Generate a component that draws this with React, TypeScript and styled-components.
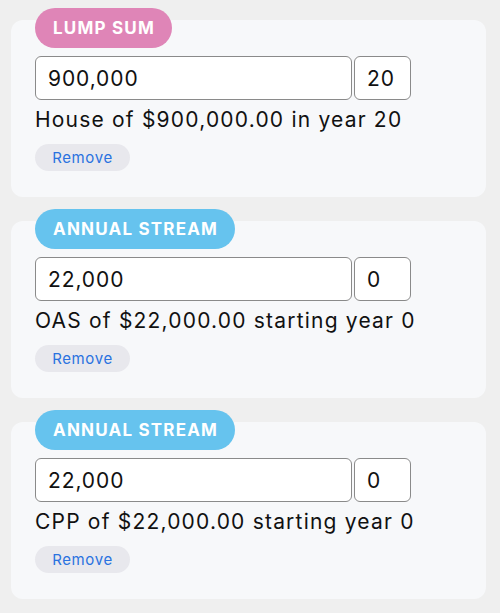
import React from "react";
import styled, { createGlobalStyle } from "styled-components";

const Global = createGlobalStyle`
  html, body { margin: 0; padding: 0; background: #efefef; }
  body { font-family: Inter, "Noto Sans", sans-serif; color: #111; }
  * { box-sizing: border-box; }
`;

const Page = styled.div`
  display: flex;
  flex-direction: column;
  gap: 24px;
  padding: 20px 14px 14px 11px;
`;

const Card = styled.section`
  background: #f7f8fa;
  border-radius: 12px;
  padding: 0 24px 26px 24px;
  display: flex;
  flex-direction: column;
  align-items: flex-start;
`;

const Badge = styled.div<{ $tone: "pink" | "blue" }>`
  margin-top: -12px;
  height: 40px;
  display: flex;
  align-items: center;
  padding: 0 17px 0 18px;
  border-radius: 20px;
  background: ${(p) => (p.$tone === "pink" ? "#df85b7" : "#66c3ee")};
  color: #fff;
  font-weight: 700;
  font-size: 17px;
  letter-spacing: 1.2px;
`;

const InputRow = styled.div`
  display: flex;
  gap: 2px;
  margin-top: 8px;
`;

const Field = styled.input<{ $w: number }>`
  width: ${(p) => p.$w}px;
  height: 44px;
  border: 1px solid #8a8a8a;
  border-radius: 6px;
  background: #fff;
  padding: 0 12px;
  font-family: Inter, "Noto Sans", sans-serif;
  font-size: 21px;
  letter-spacing: 0.9px;
  color: #111;
  outline: none;
`;

const Summary = styled.div`
  margin-top: 4px;
  font-size: 21px;
  letter-spacing: 1.2px;
  line-height: 32px;
  color: #111;
`;

const RemoveBtn = styled.button`
  margin-top: 8px;
  height: 27px;
  width: 95px;
  border: none;
  border-radius: 14px;
  background: #e8e8ed;
  color: #2a72e0;
  font-family: Inter, "Noto Sans", sans-serif;
  font-size: 15px;
  letter-spacing: 0.6px;
  padding: 0;
`;

type Item = { kind: "LUMP SUM" | "ANNUAL STREAM"; amount: string; year: string; text: string };

const items: Item[] = [
  { kind: "LUMP SUM", amount: "900,000", year: "20", text: "House of $900,000.00 in year 20" },
  { kind: "ANNUAL STREAM", amount: "22,000", year: "0", text: "OAS of $22,000.00 starting year 0" },
  { kind: "ANNUAL STREAM", amount: "22,000", year: "0", text: "CPP of $22,000.00 starting year 0" },
];

export default function App() {
  return (
    <>
      <Global />
      <Page>
        {items.map((it, i) => (
          <Card key={i}>
            <Badge $tone={it.kind === "LUMP SUM" ? "pink" : "blue"}>{it.kind}</Badge>
            <InputRow>
              <Field $w={317} defaultValue={it.amount} />
              <Field $w={57} defaultValue={it.year} />
            </InputRow>
            <Summary>{it.text}</Summary>
            <RemoveBtn>Remove</RemoveBtn>
          </Card>
        ))}
      </Page>
    </>
  );
}
